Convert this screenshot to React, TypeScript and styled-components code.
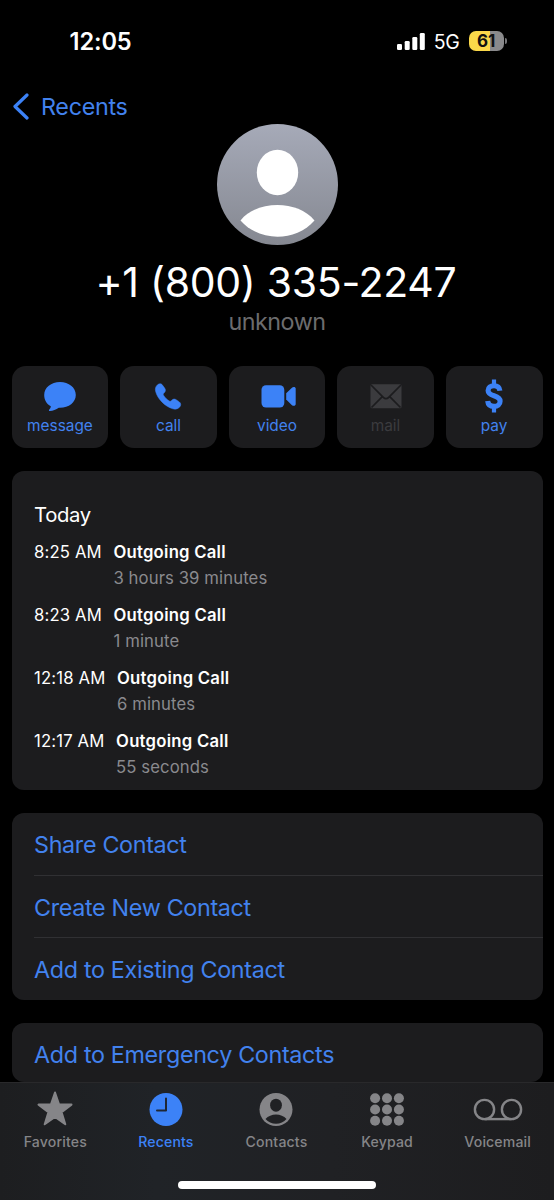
import React from 'react';
import styled, { createGlobalStyle } from 'styled-components';

const blue = '#3c82f7';
const textBlue = '#4282ee';
const cardColor = '#1c1c1e';
const gray = '#858588';

const GlobalStyle = createGlobalStyle`
  * { box-sizing: border-box; }
  body { margin: 0; background: #000; }
`;

const Screen = styled.div`
  width: 554px;
  height: 1200px;
  overflow: hidden;
  display: flex;
  flex-direction: column;
  background: #000;
  color: #fff;
  font-family: Inter, 'Liberation Sans', sans-serif;
`;

const StatusBar = styled.header`
  height: 82px;
  flex: none;
  display: flex;
  justify-content: space-between;
  padding: 0 47px 0 69.5px;
`;

const Clock = styled.time`
  font-size: 23.6px;
  font-weight: 600;
  line-height: 84px;
  letter-spacing: -0.1px;
`;

const StatusIcons = styled.div`
  display: flex;
  align-items: center;
  height: 82px;
`;

const Network = styled.span`
  margin: 2px 9px 0 8.5px;
  font-size: 19.5px;
  letter-spacing: -0.3px;
`;

const Battery = styled.div`
  width: 35.5px;
  height: 20px;
  border-radius: 7px;
  background: linear-gradient(90deg, #fbd84a 61%, #8a8a8c 61%);
  color: #111;
  font-size: 17px;
  font-weight: 700;
  line-height: 20px;
  text-align: center;
`;

const BatteryCap = styled.span`
  width: 2px;
  height: 6px;
  margin-left: 1px;
  border-radius: 0 2px 2px 0;
  background: #77777a;
`;

const BackLink = styled.a`
  height: 41.5px;
  flex: none;
  display: flex;
  align-items: center;
  gap: 12px;
  padding: 8px 0 0 13px;
  color: ${textBlue};
  font-size: 23.3px;
  letter-spacing: -0.3px;
`;

const Profile = styled.section`
  height: 242.5px;
  flex: none;
  display: flex;
  flex-direction: column;
  align-items: center;
`;

const PhoneNumber = styled.h1`
  margin: 13px 2px 0 0;
  font-size: 41px;
  font-weight: 400;
  line-height: 48px;
  letter-spacing: -0.3px;
`;

const Subtitle = styled.p`
  margin: 0;
  font-size: 23.3px;
  line-height: 32px;
  letter-spacing: -0.5px;
  color: #6c6c6e;
`;

const Actions = styled.div`
  flex: none;
  display: grid;
  grid-template-columns: repeat(5, 1fr);
  gap: 11.6px;
  padding: 0 11.5px;
`;

const ActionButton = styled.div<{ $off?: boolean }>`
  height: 82px;
  border-radius: 14px;
  background: ${cardColor};
  color: ${(p) => (p.$off ? '#3b3b3e' : blue)};
  display: flex;
  flex-direction: column;
  align-items: center;
`;

const ActionIcon = styled.svg`
  width: 48px;
  height: 36px;
  margin-top: 12.5px;
  fill: currentColor;
`;

const ActionLabel = styled.span<{ $off?: boolean }>`
  font-size: 15.4px;
  line-height: 21px;
  letter-spacing: 0;
  color: ${(p) => (p.$off ? '#3b3b3e' : textBlue)};
`;

const Card = styled.section`
  flex: none;
  margin: 22.5px 11.5px 0;
  border-radius: 12px;
  background: ${cardColor};
  overflow: hidden;
`;

const CallLog = styled(Card)`
  height: 319.5px;
  padding: 31px 22.5px 0;
`;

const DayTitle = styled.h2`
  margin: 0 0 11.1px;
  font-size: 20.3px;
  line-height: 26px;
  font-weight: 400;
  letter-spacing: -0.35px;
`;

const CallRow = styled.div`
  height: 63px;
  display: flex;
  gap: 11.6px;
  font-size: 16.7px;
  line-height: 26px;
  letter-spacing: 0.15px;
`;

const CallKind = styled.div`
  font-weight: 600;
  letter-spacing: 0.25px;
`;

const CallLength = styled.div`
  color: #8a8a8e;
  letter-spacing: 0.1px;
`;

const LinkRow = styled.a`
  display: block;
  height: 62.4px;
  margin-left: 22.5px;
  font-size: 23.3px;
  line-height: 63px;
  letter-spacing: -0.32px;
  color: ${textBlue};
  & + & { border-top: 1px solid #303033; }
`;

const EmergencyCard = styled(Card)`
  height: 59.5px;
  margin-top: 23px;
  & ${LinkRow} { line-height: 64px; }
`;

const TabBar = styled.nav`
  flex: 1;
  position: relative;
  border-top: 1px solid #29292b;
  background: linear-gradient(90deg, #1d1e20, #202327 28%, #202124 60%, #1d1d1f);
`;

const Tabs = styled.div`
  display: grid;
  grid-template-columns: repeat(5, 1fr);
  padding-right: 1px;
`;

const Tab = styled.div<{ $active?: boolean }>`
  display: flex;
  flex-direction: column;
  align-items: center;
  color: ${(p) => (p.$active ? blue : gray)};
  font-size: 14.1px;
  font-weight: 500;
  line-height: 20px;
  letter-spacing: 0.15px;
`;

const TabIcon = styled.svg`
  width: 52px;
  height: 42px;
  margin: 5px 0 2px;
  fill: currentColor;
`;

const HomeIndicator = styled.div`
  width: 198px;
  height: 8px;
  margin: 28.7px auto 0;
  border-radius: 4px;
  background: #fff;
`;

const actions = [
  {
    label: 'message',
    art: <path d="M24 3c8.800 0 15.800 5.600 15.800 12.900S32.800 28.700 24 28.700h-1.200c-2.600 2-6.100 3.200-8.800 3.400-1.100 0-1.400-.9-.7-1.700.9-1.100 1.500-2 1.500-3.200C10.500 24.800 8.200 20.700 8.200 15.900 8.200 8.600 15.200 3 24 3z" />,
  },
  {
    label: 'call',
    art: <path transform="translate(.9 0)" stroke="currentColor" strokeWidth=".5" d="M12.400 6c1.800-1.700 4-1.600 5.300.2l2 2.800c1.300 1.900 1 3.300-.3 4.700l-.8.9c-.4.500-.4 1 0 1.600 1.600 2.500 3.300 4.200 5.800 5.800.6.400 1.100.4 1.600 0l.9-.8c1.400-1.300 2.800-1.600 4.700-.3l2.800 2c1.800 1.300 1.900 3.500.2 5.300-1.700 1.800-4 2.400-6.700 1.600C20.300 27.600 12.800 20.100 10.800 12.700c-.8-2.700-.2-5 1.600-6.700z" />,
  },
  {
    label: 'video',
    art: (
      <g>
        <rect x="8.500" y="6.200" width="22.800" height="22.400" rx="4.500" />
        <path d="M33.200 14.200l5.500-5.300c1.700-1.500 4-1 4 .9v15.200c0 1.900-2.300 2.400-4 .9l-5.500-5.300z" />
      </g>
    ),
  },
  {
    label: 'mail',
    off: true,
    art: (
      <g>
        <rect x="8.500" y="5.200" width="31" height="24" rx="1.500" />
        <path d="M9 6l12.300 12.300c1.700 1.700 3.700 1.700 5.400 0L39 6M9.500 28.500l10.800-10.800M38.500 28.500L27.700 17.700" fill="none" stroke={cardColor} strokeWidth="1.700" />
      </g>
    ),
  },
  {
    label: 'pay',
    art: (
      <g fill="none" stroke="currentColor">
        <path d="M24 .6v5.500M24 28v5.500" strokeWidth="4.200" />
        <path d="M29.900 11.700C29.500 8.400 27.400 6.700 24 6.700c-3.600 0-5.900 1.800-5.900 4.800 0 6.900 12 3.600 12 10.700 0 3.200-2.500 5.200-6.100 5.200-3.800 0-6-1.900-6.300-5.400" strokeWidth="5.100" />
      </g>
    ),
  },
];

const calls = [
  { time: '8:25 AM', length: '3 hours 39 minutes' },
  { time: '8:23 AM', length: '1 minute' },
  { time: '12:18 AM', length: '6 minutes' },
  { time: '12:17 AM', length: '55 seconds' },
];

const tabs = [
  {
    label: 'Favorites',
    art: <path d="M26 4.500l4.100 12.100h12.400L32.600 24.200l3.700 12.100L26 29l-10.300 7.300 3.700-12.100L9.500 16.600h12.400z" stroke="currentColor" strokeWidth="2" strokeLinejoin="round" />,
  },
  {
    label: 'Recents',
    active: true,
    art: (
      <g>
        <circle cx="26" cy="21.500" r="16.500" />
        <path d="M26 10.500v12h-9" fill="none" stroke="#1f2734" strokeWidth="2" strokeLinecap="round" strokeLinejoin="round" />
      </g>
    ),
  },
  {
    label: 'Contacts',
    art: (
      <g>
        <circle cx="26" cy="21.500" r="16.500" />
        <ellipse cx="26" cy="17.200" rx="5.900" ry="6.500" fill="#202124" />
        <path d="M15.500 31C18 28 22 26.500 26 26.500S34 28 36.500 31C34 34 30 35.800 26 35.800S18 34 15.500 31z" fill="#202124" />
      </g>
    ),
  },
  {
    label: 'Keypad',
    art: (
      <g>
        {[10.2, 21.5, 32.8].map((y) => [14.1, 26, 37.9].map((x) => <circle key={`${x}-${y}`} cx={x} cy={y} r="5" />))}
      </g>
    ),
  },
  {
    label: 'Voicemail',
    art: (
      <g fill="none" stroke="currentColor" strokeWidth="2.400">
        <circle cx="12.500" cy="21.500" r="9.600" />
        <circle cx="39.500" cy="21.500" r="9.600" />
        <path d="M12.500 31.100h27" />
      </g>
    ),
  },
];

export default function App() {
  return (
    <Screen>
      <GlobalStyle />
      <StatusBar>
        <Clock>12:05</Clock>
        <StatusIcons>
          <svg width="28" height="18" viewBox="0 0 28 18" fill="#fff">
            <rect x="0" y="12" width="5" height="6" rx="1.300" />
            <rect x="7.700" y="9" width="5" height="9" rx="1.300" />
            <rect x="15.300" y="5" width="5" height="13" rx="1.300" />
            <rect x="22.800" y="1" width="5" height="17" rx="1.300" />
          </svg>
          <Network>5G</Network>
          <Battery>61</Battery>
          <BatteryCap />
        </StatusIcons>
      </StatusBar>
      <BackLink>
        <svg width="16" height="27" viewBox="0 0 16 27" fill="none" stroke={blue} strokeWidth="3.200" strokeLinecap="round" strokeLinejoin="round">
          <path d="M14 2L2 13.500 14 25" />
        </svg>
        <span>Recents</span>
      </BackLink>
      <Profile>
        <svg width="121" height="121" viewBox="0 0 121 121">
          <defs>
            <linearGradient id="avatar" x1="0" y1="0" x2="0" y2="1">
              <stop offset="0" stopColor="#a6aab8" />
              <stop offset="1" stopColor="#858891" />
            </linearGradient>
          </defs>
          <circle cx="60.500" cy="60.500" r="60.500" fill="url(#avatar)" />
          <ellipse cx="60.500" cy="48.500" rx="20.700" ry="22.700" fill="#fff" />
          <path d="M23.500 96.500C32 86 46 81 60.500 81s28.500 5 37 15.500C88 107.500 74 112.700 60.500 112.700S33 107.500 23.500 96.500z" fill="#fff" />
        </svg>
        <PhoneNumber>+1 (800) 335-2247</PhoneNumber>
        <Subtitle>unknown</Subtitle>
      </Profile>
      <Actions>
        {actions.map((a) => (
          <ActionButton key={a.label} $off={a.off}>
            <ActionIcon viewBox="0 0 48 36">{a.art}</ActionIcon>
            <ActionLabel $off={a.off}>{a.label}</ActionLabel>
          </ActionButton>
        ))}
      </Actions>
      <CallLog>
        <DayTitle>Today</DayTitle>
        {calls.map((c) => (
          <CallRow key={c.time}>
            <time>{c.time}</time>
            <div>
              <CallKind>Outgoing Call</CallKind>
              <CallLength>{c.length}</CallLength>
            </div>
          </CallRow>
        ))}
      </CallLog>
      <Card>
        <LinkRow>Share Contact</LinkRow>
        <LinkRow>Create New Contact</LinkRow>
        <LinkRow>Add to Existing Contact</LinkRow>
      </Card>
      <EmergencyCard>
        <LinkRow>Add to Emergency Contacts</LinkRow>
      </EmergencyCard>
      <TabBar>
        <Tabs>
          {tabs.map((t) => (
            <Tab key={t.label} $active={t.active}>
              <TabIcon viewBox="0 0 52 42">{t.art}</TabIcon>
              {t.label}
            </Tab>
          ))}
        </Tabs>
        <HomeIndicator />
      </TabBar>
    </Screen>
  );
}
